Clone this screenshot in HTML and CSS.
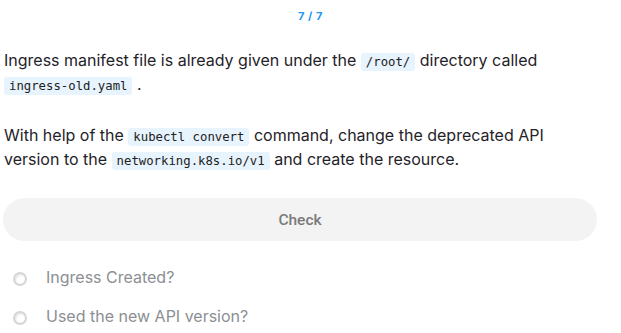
FILE: index.html
```html
<!doctype html>
<html lang="en">
<head>
	<meta charset="utf-8">
	<title>Ingress task</title>
	<link rel="stylesheet" href="styles.css">
</head>
<body>
<div class="task">
	<div class="counter">7 / 7</div>

	<div class="question">
		<p>Ingress manifest file is already given under the <code>/root/</code> directory called <code>ingress-old.yaml</code> .</p>
		<p>With help of the <code>kubectl convert</code> command, change the deprecated API version to the <code>networking.k8s.io/v1</code> and create the resource.</p>
	</div>

	<button class="check">Check</button>

	<ul class="checks">
		<li><span class="dot"></span>Ingress Created?</li>
		<li><span class="dot"></span>Used the new API version?</li>
	</ul>
</div>
</body>
</html>
```

FILE: styles.css
```css
html,body{
	margin: 0;
	padding: 0;
	background: #fff;
	font-family: Inter, "Noto Sans", sans-serif;
}
*{
	box-sizing: border-box;
}
	.task{
		padding: 8px 24px 0 3px;
	}
	.counter{
		text-align: center;
		margin-left: 21px;
		color: #2196f3;
		font-size: 11px;
		font-weight: 700;
		letter-spacing: 0.5px;
		line-height: 16px;
	}
	.question{
		padding: 24px 0 0 1px;
		color: #1f2329;
		font-size: 16px;
		line-height: 24px;
	}
	.question p{
		margin: 0 0 27px;
	}
	code{
		font-family: "DejaVu Sans Mono", monospace;
		font-size: 12.3px;
		line-height: 1;
		white-space: nowrap;
		background: #e7f3fd;
		color: #222;
		border-radius: 3px;
		padding: 2px 5px;
	}
	.check{
		display: block;
		width: 100%;
		height: 43px;
		margin-top: 0;
		border: none;
		border-radius: 22px;
		background: #f3f3f3;
		color: #7a7a7a;
		font-family: Roboto, Arial, sans-serif;
		font-size: 15.5px;
		font-weight: 500;
	}
	.checks{
		list-style: none;
		margin: 16px 0 0;
		padding: 0 0 0 10px;
	}
	.checks li{
		display: flex;
		align-items: center;
		height: 39px;
		color: #8c8f94;
		font-size: 16px;
	}
	.dot{
		width: 14px;
		height: 14px;
		border-radius: 50%;
		border: 2px solid #d6d6d6;
		box-shadow: inset 1px 1px 2px rgba(0,0,0,.12);
		margin: 5px 19px 0 0;
	}
```
